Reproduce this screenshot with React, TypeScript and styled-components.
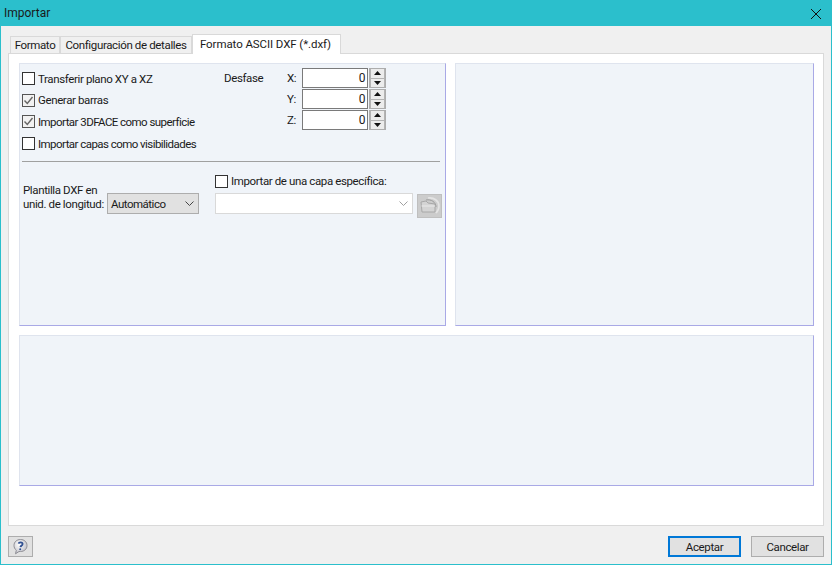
import React from "react";
import styled, { createGlobalStyle } from "styled-components";

const GlobalStyle = createGlobalStyle`
  html, body {
    margin: 0;
    padding: 0;
    background: #f0f0f0;
  }
  * {
    box-sizing: border-box;
  }
`;

const Dialog = styled.div`
  width: 832px;
  height: 565px;
  display: flex;
  flex-direction: column;
  background: #f0f0f0;
  border: 1px solid #2bbfcc;
  border-top: none;
  font-family: Roboto, "Liberation Sans", sans-serif;
  font-size: 11.5px;
  letter-spacing: -0.38px;
  color: #1a1a1a;
  overflow: hidden;
`;

const TitleBar = styled.div`
  height: 26px;
  flex: none;
  display: flex;
  align-items: center;
  justify-content: space-between;
  padding: 0 10px 0 3px;
  background: #2bbfcc;
  font-size: 12px;
  letter-spacing: 0;
`;

const Body = styled.div`
  flex: 1;
  display: flex;
  flex-direction: column;
  padding: 8px 7px 0 7px;
  min-height: 0;
`;

const TabStrip = styled.div`
  height: 20px;
  flex: none;
  display: flex;
  align-items: flex-end;
  padding-left: 2px;
  position: relative;
  z-index: 1;
  margin-bottom: -1px;
`;

const Tab = styled.div<{ $active?: boolean; $width: number }>`
  width: ${(p) => p.$width}px;
  height: ${(p) => (p.$active ? "20px" : "18px")};
  display: flex;
  align-items: center;
  justify-content: center;
  padding: ${(p) => (p.$active ? "0 2px 2px 0" : "0")};
  background: ${(p) => (p.$active ? "#fff" : "#f0f0f0")};
  border: 1px solid #d9d9d9;
  border-bottom: ${(p) => (p.$active ? "none" : "1px solid #d9d9d9")};
  letter-spacing: ${(p) => (p.$active ? "-0.08px" : "-0.36px")};
  & + & {
    border-left: ${(p) => (p.$active ? "1px solid #d9d9d9" : "none")};
  }
`;

const TabPanel = styled.div`
  height: 473px;
  flex: none;
  display: grid;
  grid-template-columns: 427px 359px;
  grid-template-rows: 263px 151px;
  gap: 9px;
  padding: 9px 10px 0 10px;
  background: #fff;
  border: 1px solid #d9d9d9;
`;

const Group = styled.div<{ $wide?: boolean }>`
  background: #f0f4f9;
  border: 1px solid #dfe4ee;
  border-right-color: #a9a9e6;
  border-bottom-color: #a9a9e6;
  ${(p) => (p.$wide ? "grid-column: 1 / span 2;" : "")}
`;

const FormGroup = styled(Group)`
  display: flex;
  flex-direction: column;
  padding: 4px 3px 0 2px;
`;

const TopArea = styled.div`
  height: 93px;
  display: flex;
`;

const CheckList = styled.div`
  width: 202px;
  display: flex;
  flex-direction: column;
`;

const CheckRow = styled.label<{ $tight?: boolean }>`
  height: 21.6px;
  display: flex;
  align-items: center;
  gap: 3px;
  white-space: nowrap;
  ${(p) => (p.$tight ? "letter-spacing: -0.55px;" : "")}
`;

const Box = styled.span`
  width: 13px;
  height: 13px;
  flex: none;
  display: flex;
  align-items: center;
  justify-content: center;
  background: #fff;
  border: 1px solid #333;
`;

const CheckedBox = styled(Box)`
  background: #f2f2f2;
  border-color: #555;
`;

const OffsetLabel = styled.div`
  width: 63px;
  padding-top: 3px;
  line-height: 15px;
`;

const Spinners = styled.div`
  display: flex;
  flex-direction: column;
  gap: 1px;
`;

const SpinnerRow = styled.div`
  height: 20px;
  display: flex;
  align-items: center;
`;

const AxisLabel = styled.span`
  width: 15px;
`;

const NumberField = styled.div`
  width: 66px;
  height: 20px;
  display: flex;
  align-items: center;
  justify-content: flex-end;
  padding-right: 2px;
  background: #fff;
  border: 1px solid #7a7a7a;
  font-size: 12px;
`;

const StepBox = styled.div`
  width: 17px;
  height: 20px;
  margin-left: 1px;
  display: flex;
  flex-direction: column;
  justify-content: center;
  gap: 1px;
  padding: 0 1px;
  background: #b4b4b4;
  border: 1px solid #adadad;
`;

const StepButton = styled.div`
  height: 8.5px;
  display: flex;
  align-items: center;
  justify-content: center;
  background: #ececec;
`;

const Divider = styled.div`
  height: 1px;
  margin-right: 2px;
  background: #a0a0a0;
`;

const BottomArea = styled.div`
  display: flex;
  padding-top: 12px;
`;

const TemplateColumn = styled.div`
  width: 193px;
  flex: none;
  padding: 9px 0 0 1px;
  display: flex;
  align-items: flex-start;
`;

const TemplateLabel = styled.div`
  width: 84px;
  line-height: 14px;
  white-space: nowrap;
`;

const Select = styled.div`
  width: 92px;
  height: 21px;
  margin-top: 10px;
  display: flex;
  align-items: center;
  justify-content: space-between;
  padding: 0 4px 0 3px;
  background: #e1e1e1;
  border: 1px solid #adadad;
  letter-spacing: -0.5px;
`;

const LayerColumn = styled.div`
  display: flex;
  flex-direction: column;
  gap: 5px;
`;

const LayerCheck = styled(CheckRow)`
  height: 14px;
`;

const LayerRow = styled.div`
  display: flex;
  align-items: flex-start;
  gap: 4px;
`;

const DisabledCombo = styled.div`
  width: 198px;
  height: 21px;
  display: flex;
  align-items: center;
  justify-content: flex-end;
  padding-right: 4px;
  background: #fff;
  border: 1px solid #d9d9d9;
`;

const FolderButton = styled.div`
  width: 25px;
  height: 24px;
  margin-top: 1px;
  display: flex;
  align-items: center;
  justify-content: center;
  background: #cccccc;
  border: 1px solid #bfbfbf;
`;

const Footer = styled.div`
  flex: 1;
  display: flex;
  align-items: center;
  justify-content: space-between;
  padding-top: 3px;
`;

const HelpButton = styled.div`
  width: 25px;
  height: 21px;
  display: flex;
  align-items: center;
  justify-content: center;
  background: #e1e1e1;
  border: 1px solid #adadad;
`;

const FooterActions = styled.div`
  display: flex;
  gap: 10px;
`;

const DialogButton = styled.div<{ $primary?: boolean }>`
  width: 73px;
  height: 21px;
  display: flex;
  align-items: center;
  justify-content: center;
  background: #e1e1e1;
  border: ${(p) => (p.$primary ? "2px solid #0078d7" : "1px solid #adadad")};
`;

const Chevron = ({ color }: { color: string }) => (
  <svg width="9" height="5" viewBox="0 0 9 5">
    <path d="M0.5 0.5 L4.5 4.5 L8.5 0.5" fill="none" stroke={color} strokeWidth="1" />
  </svg>
);

const Check = () => (
  <svg width="11" height="11" viewBox="0 0 11 11">
    <path d="M1.5 5.5 L4.3 8.5 L9.5 2" fill="none" stroke="#666" strokeWidth="1.4" />
  </svg>
);

const CheckItem = ({ label, checked, tight }: { label: string; checked?: boolean; tight?: boolean }) => (
  <CheckRow $tight={tight}>
    {checked ? (
      <CheckedBox>
        <Check />
      </CheckedBox>
    ) : (
      <Box />
    )}
    {label}
  </CheckRow>
);

const Spinner = ({ axis }: { axis: string }) => (
  <SpinnerRow>
    <AxisLabel>{axis}:</AxisLabel>
    <NumberField>0</NumberField>
    <StepBox>
      <StepButton>
        <svg width="7" height="4" viewBox="0 0 7 4">
          <path d="M3.5 0 L7 4 L0 4 Z" fill="#111" />
        </svg>
      </StepButton>
      <StepButton>
        <svg width="7" height="4" viewBox="0 0 7 4">
          <path d="M0 0 L7 0 L3.5 4 Z" fill="#111" />
        </svg>
      </StepButton>
    </StepBox>
  </SpinnerRow>
);

export default function App() {
  return (
    <Dialog>
      <GlobalStyle />
      <TitleBar>
        Importar
        <svg width="11" height="11" viewBox="0 0 11 11">
          <path d="M1 1 L11 11 M11 1 L1 11" stroke="#111" strokeWidth="1" />
        </svg>
      </TitleBar>
      <Body>
        <TabStrip>
          <Tab $width={50}>Formato</Tab>
          <Tab $width={132}>Configuración de detalles</Tab>
          <Tab $width={149} $active>
            Formato ASCII DXF (*.dxf)
          </Tab>
        </TabStrip>
        <TabPanel>
          <FormGroup>
            <TopArea>
              <CheckList>
                <CheckItem label="Transferir plano XY a XZ" />
                <CheckItem label="Generar barras" checked />
                <CheckItem label="Importar 3DFACE como superficie" checked tight />
                <CheckItem label="Importar capas como visibilidades" tight />
              </CheckList>
              <OffsetLabel>Desfase</OffsetLabel>
              <Spinners>
                <Spinner axis="X" />
                <Spinner axis="Y" />
                <Spinner axis="Z" />
              </Spinners>
            </TopArea>
            <Divider />
            <BottomArea>
              <TemplateColumn>
                <TemplateLabel>
                  Plantilla DXF en
                  <br />
                  unid. de longitud:
                </TemplateLabel>
                <Select>
                  Automático
                  <Chevron color="#444" />
                </Select>
              </TemplateColumn>
              <LayerColumn>
                <LayerCheck>
                  <Box />
                  Importar de una capa específica:
                </LayerCheck>
                <LayerRow>
                  <DisabledCombo>
                    <Chevron color="#a0a0a0" />
                  </DisabledCombo>
                  <FolderButton>
                    <svg width="21" height="18" viewBox="0 0 21 18">
                      <path d="M9 1 C15 0 20 4 20 9 C20 12 19 14 17 16" fill="none" stroke="#e4e4e4" strokeWidth="1.6" />
                      <path d="M7 3 C12 2 17 5 17 10" fill="none" stroke="#9c9c9c" strokeWidth="1" />
                      <path d="M2 5 L7 4 L9 6 L16 7 L16 15 L3 15 Z" fill="#d4d4d4" stroke="#a8a8a8" strokeWidth="1" />
                      <path d="M2.5 9 L16 9" stroke="#e6e6e6" strokeWidth="1.2" />
                    </svg>
                  </FolderButton>
                </LayerRow>
              </LayerColumn>
            </BottomArea>
          </FormGroup>
          <Group />
          <Group $wide />
        </TabPanel>
        <Footer>
          <HelpButton>
            <svg width="17" height="17" viewBox="0 0 17 17">
              <defs>
                <radialGradient id="helpBall" cx="40%" cy="35%" r="70%">
                  <stop offset="0%" stopColor="#ffffff" />
                  <stop offset="100%" stopColor="#bcbcc4" />
                </radialGradient>
              </defs>
              <path d="M8.5 1.5 C12.3 1.5 15 4 15 7.5 C15 11 12.3 13.5 8.5 13.5 L7 13.5 L3.5 15.8 L4.3 12.2 C2.8 11 2 9.4 2 7.5 C2 4 4.7 1.5 8.5 1.5 Z" fill="url(#helpBall)" stroke="#8f8f96" strokeWidth="1" />
              <path d="M6.6 5.6 C6.8 4 10.6 3.8 10.6 5.9 C10.6 7.4 8.7 7.5 8.4 9.2" fill="none" stroke="#2f4f91" strokeWidth="1.8" />
              <circle cx="8.2" cy="11.2" r="1" fill="#2f4f91" />
            </svg>
          </HelpButton>
          <FooterActions>
            <DialogButton $primary>Aceptar</DialogButton>
            <DialogButton>Cancelar</DialogButton>
          </FooterActions>
        </Footer>
      </Body>
    </Dialog>
  );
}
